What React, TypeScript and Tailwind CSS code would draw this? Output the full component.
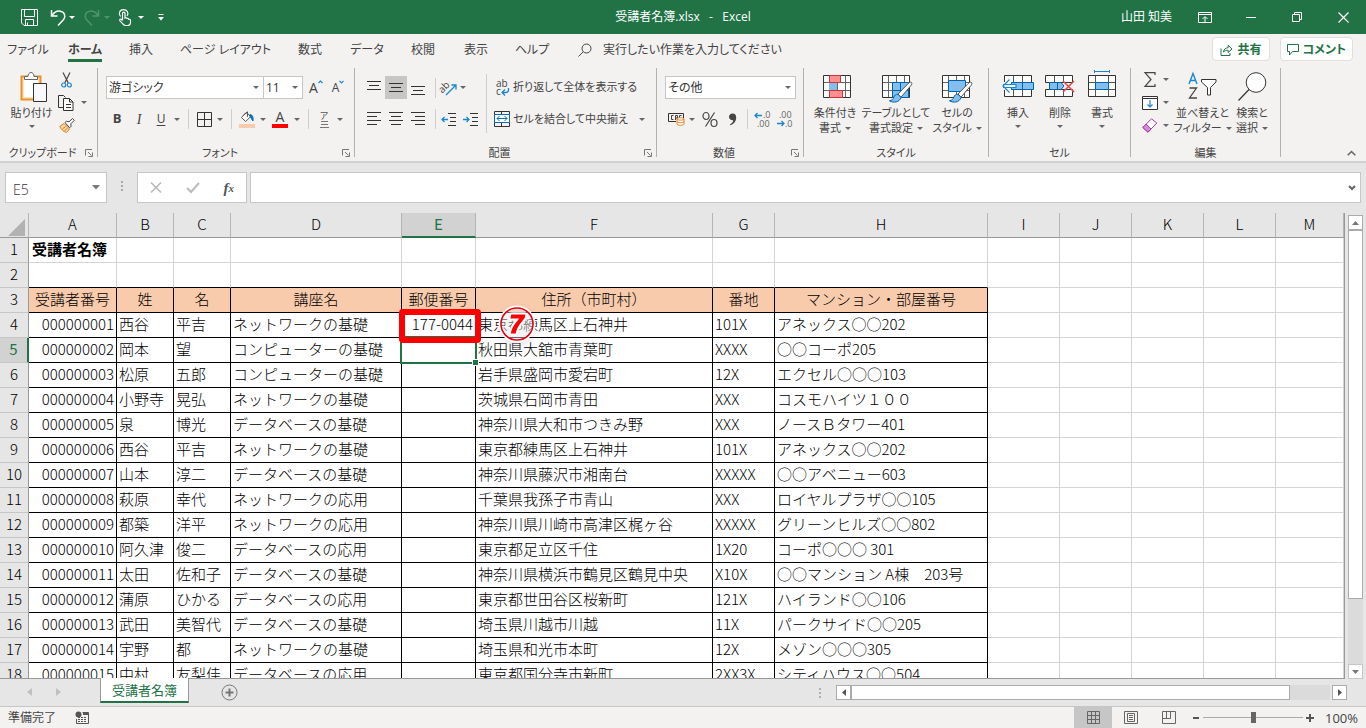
import type { ReactNode } from "react"
import clsx from "clsx"

const UI_FONT = "font-['Open_Sans','Noto_Sans_CJK_JP',sans-serif]"
const CELL_FONT = "font-['Noto_Sans_CJK_JP',sans-serif]"

const TABS = [
  { label: "ファイル", width: "w-14" },
  { label: "ホーム", width: "w-[58px]" },
  { label: "挿入", width: "w-[54px]" },
  { label: "ページ レイアウト", width: "w-[115px]" },
  { label: "数式", width: "w-[54px]" },
  { label: "データ", width: "w-[60px]" },
  { label: "校閲", width: "w-[52px]" },
  { label: "表示", width: "w-[54px]" },
  { label: "ヘルプ", width: "w-[58px]" },
]

const COLUMNS = [
  { name: "A", width: "w-[88px]" },
  { name: "B", width: "w-[57px]" },
  { name: "C", width: "w-[57px]" },
  { name: "D", width: "w-[171px]" },
  { name: "E", width: "w-[74px]" },
  { name: "F", width: "w-[237px]" },
  { name: "G", width: "w-[62px]" },
  { name: "H", width: "w-[213px]" },
  { name: "I", width: "w-[72px]" },
  { name: "J", width: "w-[72px]" },
  { name: "K", width: "w-[72px]" },
  { name: "L", width: "w-[72px]" },
  { name: "M", width: "" },
]

const HEADINGS = ["受講者番号", "姓", "名", "講座名", "郵便番号", "住所（市町村）", "番地", "マンション・部屋番号"]

const STUDENTS = [
  ["000000001", "西谷", "平吉", "ネットワークの基礎", "177-0044", "東京都練馬区上石神井", "101X", "アネックス○○202"],
  ["000000002", "岡本", "望", "コンピューターの基礎", "", "秋田県大舘市青葉町", "XXXX", "○○コーポ205"],
  ["000000003", "松原", "五郎", "コンピューターの基礎", "", "岩手県盛岡市愛宕町", "12X", "エクセル○○○103"],
  ["000000004", "小野寺", "晃弘", "ネットワークの基礎", "", "茨城県石岡市青田", "XXX", "コスモハイツ１００"],
  ["000000005", "泉", "博光", "データベースの基礎", "", "神奈川県大和市つきみ野", "XXX", "ノースＢタワー401"],
  ["000000006", "西谷", "平吉", "ネットワークの基礎", "", "東京都練馬区上石神井", "101X", "アネックス○○202"],
  ["000000007", "山本", "淳二", "データベースの基礎", "", "神奈川県藤沢市湘南台", "XXXXX", "○○アベニュー603"],
  ["000000008", "萩原", "幸代", "ネットワークの応用", "", "千葉県我孫子市青山", "XXX", "ロイヤルプラザ○○105"],
  ["000000009", "都築", "洋平", "ネットワークの応用", "", "神奈川県川崎市高津区梶ヶ谷", "XXXXX", "グリーンヒルズ○○802"],
  ["000000010", "阿久津", "俊二", "データベースの応用", "", "東京都足立区千住", "1X20", "コーポ○○○ 301"],
  ["000000011", "太田", "佐和子", "データベースの基礎", "", "神奈川県横浜市鶴見区鶴見中央", "X10X", "○○マンション A棟　203号"],
  ["000000012", "蒲原", "ひかる", "データベースの応用", "", "東京都世田谷区桜新町", "121X", "ハイランド○○106"],
  ["000000013", "武田", "美智代", "データベースの基礎", "", "埼玉県川越市川越", "11X", "パークサイド○○205"],
  ["000000014", "宇野", "都", "ネットワークの基礎", "", "埼玉県和光市本町", "12X", "メゾン○○○305"],
  ["000000015", "中村", "友梨佳", "データベースの応用", "", "東京都国分寺市新町", "2XX3X", "シティハウス○○504"],
]

function Svg({ w, h, className, children }: { w: number; h: number; className?: string; children: ReactNode }) {
  return (
    <svg
      width={w}
      height={h}
      viewBox={`0 0 ${w} ${h}`}
      fill="none"
      stroke="#444"
      aria-hidden="true"
      className={clsx("shrink-0 overflow-visible", className)}
    >
      {children}
    </svg>
  )
}

function Caret({ color = "#666" }: { color?: string }) {
  return (
    <Svg w={6} h={3}>
      <path d="M0 0h6L3 3z" fill={color} stroke="none" />
    </Svg>
  )
}

function IconButton({ label, className, children }: { label: string; className?: string; children: ReactNode }) {
  return (
    <button type="button" aria-label={label} className={clsx("flex shrink-0 items-center justify-center", className)}>
      {children}
    </button>
  )
}

function CaretButton({ label, className = "h-[22px] w-[10px]", color }: { label: string; className?: string; color?: string }) {
  return (
    <IconButton label={label} className={className}>
      <Caret color={color} />
    </IconButton>
  )
}

function Divider() {
  return <div className="mr-1 ml-[6px] h-5 w-px shrink-0 bg-[#d0cecc]" />
}

function Group({ label, width, launcher, children }: { label: string; width: string; launcher?: boolean; children: ReactNode }) {
  return (
    <>
      <section aria-label={label} className={clsx("flex h-[93px] shrink-0 flex-col", width)}>
        <div className="flex h-[77px]">{children}</div>
        <div className="flex h-4 items-center">
          <span className="flex-1 text-center leading-4">{label}</span>
          {launcher && (
            <IconButton label={`${label}の設定`} className="mr-1">
              <Svg w={8} h={8}>
                <path d="M.5 6.500V.5H7M3 3l3.500 3.500M7.500 3.500v4h-4" stroke="#777" />
              </Svg>
            </IconButton>
          )}
        </div>
      </section>
      <div className="h-[89px] w-px shrink-0 bg-[#b3b0ad]" />
    </>
  )
}

function LargeButton({ icon, lines, width }: { icon: ReactNode; lines: string[]; width: string }) {
  return (
    <button type="button" className={clsx("flex shrink-0 flex-col items-center whitespace-nowrap", width)}>
      <span className="flex h-[36px] items-center justify-center">{icon}</span>
      <span className="mt-px leading-4">{lines[0]}</span>
      {lines[1] ? (
        <span className="flex items-center gap-1 leading-[14px]">
          {lines[1]}
          <Caret />
        </span>
      ) : (
        <span className="mt-1">
          <Caret />
        </span>
      )}
    </button>
  )
}

function Combo({ label, value, className }: { label: string; value: string; className: string }) {
  return (
    <div className={clsx("relative h-[23px] border border-[#c8c6c4] bg-white", className)}>
      <select aria-label={label} className="h-full w-full appearance-none bg-transparent pl-[2px] text-[12px] leading-5 text-[#333]">
        <option>{value}</option>
      </select>
      <span className="pointer-events-none absolute top-[9px] right-1">
        <Caret />
      </span>
    </div>
  )
}

/* three or four text lines, used by every alignment button */
function LinesIcon({ lines }: { lines: [number, number, number][] }) {
  return (
    <Svg w={14} h={18}>
      {lines.map(([x, y, w]) => (
        <path key={y} d={`M${x} ${y}.500h${w}`} stroke="#333" />
      ))}
    </Svg>
  )
}

function GridBase() {
  return (
    <>
      <path d="M.5.5h27v22H.5z" fill="#fff" stroke="#333" />
      <path d="M6.500 1v21M14.500 1v21M22.500 1v21M1 7.500h26M1 15.500h26" stroke="#666" />
    </>
  )
}

function Brush() {
  return (
    <>
      <path d="M29.500 7.500c-1-1-2.500.2-3.500 1.200L16 19l3 3.200 9.800-11.500c.9-1.200 1.500-2.300.7-3.200z" fill="#fff" stroke="#555" />
      <path d="M15.800 19.200c-2 .1-3.400 1-4 3-.6 2-1.700 3-4.300 3.600 4 2.400 10 1.600 11.600-3.300z" fill="#83beec" stroke="#0063b1" />
    </>
  )
}

function TitleBar() {
  return (
    <header className="flex h-[34px] shrink-0 items-center bg-[#217346] text-[12px] text-white">
      <div className="flex flex-1 items-center">
        <IconButton label="上書き保存" className="ml-[18px] w-[22px]">
          <Svg w={17} h={17}>
            <path d="M.5.5h16v16H3L.5 14z M3.500 1v6.500h10V1 M4.500 16v-5.500h8V16 M6.500 16v-2.500" stroke="#fff" />
          </Svg>
        </IconButton>
        <IconButton label="元に戻す" className="ml-2 w-[20px]">
          <Svg w={16} h={17}>
            <path d="M1.500 1v6h6M1.800 6.800C4 3.500 7 1.700 10.300 2.200c4.200.6 5.800 5 3.300 8.300L8 16.500" stroke="#fff" strokeWidth="1.500" />
          </Svg>
        </IconButton>
        <CaretButton label="元に戻す一覧" className="w-[8px]" color="#fff" />
        <IconButton label="やり直し" className="ml-[6px] w-[20px]">
          <Svg w={16} h={17}>
            <path d="M14.500 1v6h-6M14.200 6.800C12 3.500 9 1.700 5.700 2.200 1.500 2.800-.1 7.200 2.400 10.500L8 16.500" stroke="#4f9370" strokeWidth="1.500" />
          </Svg>
        </IconButton>
        <CaretButton label="やり直し一覧" className="ml-px w-[8px]" color="#4f9370" />
        <IconButton label="タッチ/マウス モードの切り替え" className="ml-1 w-[18px]">
          <Svg w={13} h={17}>
            <path
              d="M4.500 11V4.500c0-1.800 2.500-1.800 2.500 0V9c1-.6 1.700-.3 2 .5.900-.4 1.500 0 1.800.8 1-.2 1.700.3 1.700 1.200v1.700c0 2-1.300 3.300-3.300 3.300H7.500c-1 0-1.800-.5-2.400-1.300L2 11.800c-.9-1.300.6-2.300 1.500-1.300l1 1"
              stroke="#fff"
              strokeWidth="1.200"
            />
            <path d="M2.500 7.500C-.2 4 2 .7 5.500.7S11.300 4 9 7" stroke="#fff" strokeWidth="1.200" />
          </Svg>
        </IconButton>
        <CaretButton label="モード一覧" className="ml-px w-[14px]" color="#fff" />
        <IconButton label="クイック アクセス ツール バーのユーザー設定" className="ml-[6px] w-[14px]">
          <Svg w={6} h={7}>
            <path d="M.5.5h5" stroke="#fff" />
            <path d="M0 3h6L3 6.500z" fill="#fff" stroke="none" />
          </Svg>
        </IconButton>
      </div>
      <h1>受講者名簿.xlsx&nbsp;&nbsp; -&nbsp;&nbsp; Excel</h1>
      <div className="flex flex-1 items-center justify-end">
        <span className="mr-[10px]">山田 知美</span>
        <IconButton label="リボンの表示オプション" className="w-[46px]">
          <Svg w={14} h={11}>
            <path d="M.5.5h13v10H.5zM1 2.500h12M7 10V5M4.500 7L7 4.500 9.500 7" stroke="#fff" />
          </Svg>
        </IconButton>
        <IconButton label="最小化" className="w-[46px]">
          <Svg w={10} h={10}>
            <path d="M0 5.500h10" stroke="#fff" />
          </Svg>
        </IconButton>
        <IconButton label="元に戻す (縮小)" className="w-[46px]">
          <Svg w={10} h={10}>
            <path d="M.5 2.500h7v7h-7zM2.500 2V.5h7v7H8" stroke="#fff" />
          </Svg>
        </IconButton>
        <IconButton label="閉じる" className="w-[46px]">
          <Svg w={11} h={11}>
            <path d="M.5.5l10 10M10.500.5l-10 10" stroke="#fff" strokeWidth="1.200" />
          </Svg>
        </IconButton>
      </div>
    </header>
  )
}

function TabBar() {
  return (
    <nav className="flex h-[30px] shrink-0 items-center text-[12px] text-[#444] [font-feature-settings:'palt']">
      {TABS.map((tab) => (
        <button
          key={tab.label}
          type="button"
          className={clsx("flex h-[28px] shrink-0 flex-col items-center whitespace-nowrap", tab.width)}
        >
          <span
            className={clsx(
              "h-[27px] pt-[5px] leading-5",
              tab.label === "ホーム" && "border-b-3 border-[#217346] font-bold",
            )}
          >
            {tab.label}
          </span>
        </button>
      ))}
      <label className="ml-[17px] flex flex-1 items-center gap-[11px] pt-px">
        <Svg w={14} h={14}>
          <circle cx="8.500" cy="5.500" r="4.500" />
          <path d="M5.200 8.800L.5 13.500" />
        </Svg>
        <input
          aria-label="操作アシスト"
          placeholder="実行したい作業を入力してください"
          className="w-full bg-transparent placeholder:text-[#444]"
        />
      </label>
      <div className="mr-[13px] flex gap-[10px] font-bold text-[#217346]">
        <button type="button" className="flex h-6 items-center gap-[5px] rounded-sm border border-[#e1dfdd] bg-white px-[7px] pt-px">
          <Svg w={13} h={12}>
            <path d="M1 4.500v7h9V9M3.500 8c.3-2.700 2-4.200 4.700-4.300V1.300L12 5 8.200 8.500V6.300C6.200 6.200 4.700 6.800 3.500 8z" stroke="#217346" />
          </Svg>
          共有
        </button>
        <button type="button" className="flex h-6 items-center gap-1 rounded-sm border border-[#e1dfdd] bg-white px-[6px] pt-px">
          <Svg w={12} h={12}>
            <path d="M.5.5h11v7H5.500L2.500 11V7.500h-2z" stroke="#217346" />
          </Svg>
          コメント
        </button>
      </div>
    </nav>
  )
}

function ClipboardGroup() {
  return (
    <Group label="クリップボード" width="w-[97px]" launcher>
      <button type="button" className="ml-[9px] flex w-[45px] flex-col items-center pt-1 whitespace-nowrap">
        <Svg w={28} h={30} className="ml-1">
          <path d="M1.500 4.500h19v23h-19z" fill="#fde4b8" stroke="#e8912d" strokeWidth="2" />
          <path d="M4 7h14v18H4z" fill="#fff" stroke="none" />
          <path d="M4.500 7.500v-3H8C8 2 9.500.5 11 .5S14 2 14 4.500h3.500v3z" fill="#fff" stroke="#666" />
          <path d="M13.500 11.500h13v18h-13z" fill="#f8f8fd" stroke="#333" />
        </Svg>
        <span className="mt-[3px] mb-1 leading-4">貼り付け</span>
        <Caret />
      </button>
      <div className="ml-1 flex flex-col">
        <IconButton label="切り取り" className="h-[23px] w-4">
          <Svg w={11} h={16}>
            <path d="M2 0.500L7.300 11M9 .5L3.700 11" stroke="#444" strokeWidth="1.200" />
            <circle cx="2.700" cy="13" r="2" stroke="#1b87d0" strokeWidth="1.200" />
            <circle cx="8.300" cy="13" r="2" stroke="#1b87d0" strokeWidth="1.200" />
          </Svg>
        </IconButton>
        <div className="flex">
          <IconButton label="コピー" className="h-[23px] w-4">
            <Svg w={16} h={16}>
              <path d="M5 12.500H.5V.5h5l2 2" stroke="#333" />
              <path d="M5.500 3.500h6l3.500 3.500v8.500H5.500z" fill="#fff" stroke="#333" />
              <path d="M11.500 3.500V7H15M8 9.500h5M8 12.500h5" stroke="#333" />
            </Svg>
          </IconButton>
          <CaretButton label="コピー一覧" className="ml-1 w-[12px]" />
        </div>
        <IconButton label="書式のコピー/貼り付け" className="h-[23px] w-[18px]">
          <Svg w={16} h={15}>
            <path d="M.8 8.500L5 5.500l5.500 5.500-3 3.500C4.500 13.500 2 11.500.8 8.500z" fill="#fcd9a8" stroke="#e07b1e" />
            <path d="M3.500 11l3-2.500M5.500 13l3-3" stroke="#e07b1e" />
            <path d="M6 4.500l1.500-1.200 2.500.5L13.500.5l1.800 1.800-3.500 3.500.3 2.400-1.400 1.600z" fill="#fff" stroke="#444" />
          </Svg>
        </IconButton>
      </div>
    </Group>
  )
}

function FontGroup() {
  return (
    <Group label="フォント" width="w-[256px]" launcher>
      <div className="pt-2 pl-2">
        <div className="flex items-center">
          <Combo label="フォント名" value="游ゴシック" className="w-[158px]" />
          <Combo label="フォント サイズ" value="11" className="-ml-px w-[40px]" />
          <IconButton label="フォント サイズの拡大" className="ml-[2px] w-[22px] items-start text-[14px] leading-4">
            A
            <Svg w={5} h={4}>
              <path d="M.5 3L2.500 1l2 2" stroke="#1b87d0" strokeWidth="1.200" />
            </Svg>
          </IconButton>
          <IconButton label="フォント サイズの縮小" className="w-[22px] items-start text-[12px] leading-4">
            A
            <Svg w={5} h={4}>
              <path d="M.5.800l2 2 2-2" stroke="#1b87d0" strokeWidth="1.200" />
            </Svg>
          </IconButton>
        </div>
        <div className="mt-[9px] flex h-[22px] items-center">
          <IconButton label="太字" className="w-[22px] text-[13px] font-bold">
            B
          </IconButton>
          <IconButton label="斜体" className="w-[22px] font-['Liberation_Serif',serif] text-[14px] italic">
            I
          </IconButton>
          <IconButton label="下線" className="w-[22px] text-[12px] underline underline-offset-2">
            U
          </IconButton>
          <CaretButton label="下線の種類" />
          <Divider />
          <IconButton label="罫線" className="w-[22px]">
            <Svg w={15} h={15}>
              <path d="M.5.5h14v14H.5zM7.500 1v13M1 7.500h13" stroke="#333" />
            </Svg>
          </IconButton>
          <CaretButton label="罫線の種類" />
          <Divider />
          <IconButton label="塗りつぶしの色" className="w-[22px]">
            <Svg w={16} h={17}>
              <path d="M7 1.500L2.500 6.500l4.200 4 5-5zM4.500 4.200L8.500.8v5" fill="#fff" stroke="#555" />
              <path d="M11 3.500c2.500.3 3.500 2.500 3 6.500-1.200-1-1.500-3-3-4.500z" fill="#0f6cbd" stroke="#0f6cbd" />
              <path d="M0 13h16v4H0z" fill="#f8cbad" stroke="none" />
            </Svg>
          </IconButton>
          <CaretButton label="塗りつぶしの色一覧" />
          <IconButton label="フォントの色" className="w-[24px]">
            <span className="w-4 border-b-4 border-[#f00] text-[14px] leading-[14px]">A</span>
          </IconButton>
          <CaretButton label="フォントの色一覧" />
          <Divider />
          <IconButton label="ふりがなの表示" className="w-[22px] flex-col text-[9px] leading-[10px] text-[#555]">
            ア
            <Svg w={9} h={7}>
              <path d="M1 .5h7M1 3.500h7M0 6.500h9" stroke="#777" />
            </Svg>
          </IconButton>
          <CaretButton label="ふりがなの設定" />
        </div>
      </div>
    </Group>
  )
}

function AlignmentGroup() {
  return (
    <Group label="配置" width="w-[301px]" launcher>
      <div className="pt-2 pl-2">
        <div className="flex h-[23px] items-center">
          <IconButton label="上揃え" className="h-[23px] w-[22px]">
            <LinesIcon lines={[[0, 2, 14], [2, 6, 10], [0, 10, 14]]} />
          </IconButton>
          <IconButton label="上下中央揃え" className="h-[23px] w-[22px] bg-[#c8c6c4]">
            <LinesIcon lines={[[0, 4, 14], [2, 8, 10], [0, 12, 14]]} />
          </IconButton>
          <IconButton label="下揃え" className="h-[23px] w-[22px]">
            <LinesIcon lines={[[0, 7, 14], [2, 11, 10], [0, 15, 14]]} />
          </IconButton>
          <Divider />
          <IconButton label="方向" className="w-[18px]">
            <Svg w={18} h={16}>
              <text x="-1" y="10" transform="rotate(-45 5 8)" fontSize="10" fill="#444" stroke="none">
                ab
              </text>
              <path d="M6 15L16 5M11.500 5H16v4.500" stroke="#1b87d0" strokeWidth="1.300" />
            </Svg>
          </IconButton>
          <CaretButton label="方向一覧" />
        </div>
        <div className="mt-[9px] flex h-[22px] items-center">
          <IconButton label="左揃え" className="w-[22px]">
            <LinesIcon lines={[[0, 2, 14], [0, 6, 10], [0, 10, 14], [0, 14, 10]]} />
          </IconButton>
          <IconButton label="中央揃え" className="w-[22px]">
            <LinesIcon lines={[[0, 2, 14], [2, 6, 10], [0, 10, 14], [2, 14, 10]]} />
          </IconButton>
          <IconButton label="右揃え" className="w-[22px]">
            <LinesIcon lines={[[0, 2, 14], [4, 6, 10], [0, 10, 14], [4, 14, 10]]} />
          </IconButton>
          <Divider />
          <IconButton label="インデントを減らす" className="w-[16px]">
            <Svg w={15} h={13}>
              <path d="M7 .5h8M9 4.500h6M9 8.500h6M7 12.500h8" stroke="#333" />
              <path d="M1 6.500h6M3.500 4L1 6.500 3.500 9" stroke="#1b87d0" strokeWidth="1.300" />
            </Svg>
          </IconButton>
          <IconButton label="インデントを増やす" className="ml-[6px] w-[16px]">
            <Svg w={15} h={13}>
              <path d="M7 .5h8M9 4.500h6M9 8.500h6M7 12.500h8" stroke="#333" />
              <path d="M0 6.500h6M3.500 4L6 6.500 3.500 9" stroke="#1b87d0" strokeWidth="1.300" />
            </Svg>
          </IconButton>
        </div>
      </div>
      <div className="mt-[6px] ml-2 h-[59px] w-px bg-[#d0cecc]" />
      <div className="pt-2 pl-[7px]">
        <button type="button" className="flex h-[23px] items-center gap-[3px] whitespace-nowrap">
          <Svg w={16} h={17}>
            <text x="2" y="8" fontSize="10" fill="#444" stroke="none">
              ab
            </text>
            <text x="2" y="16" fontSize="10" fill="#444" stroke="none">
              c
            </text>
            <path d="M14.500 9v2c0 2-1 2.500-3 2.500H8.500M11 10.500l-3 3 3 3" stroke="#1b87d0" strokeWidth="1.300" />
          </Svg>
          折り返して全体を表示する
        </button>
        <div className="mt-[9px] flex">
          <button type="button" className="flex h-[22px] w-[143px] items-center gap-[3px] whitespace-nowrap">
            <Svg w={16} h={16}>
              <path d="M.5.5h15v15H.5zM7.500 0v3M7.500 12v4" stroke="#333" />
              <path d="M.5 3.500h15v8H.5z" fill="#fff" stroke="#0f6cbd" />
              <path d="M3 7.500h10M5.500 5L3 7.500 5.500 10M10.500 5L13 7.500 10.500 10" stroke="#0f6cbd" />
            </Svg>
            セルを結合して中央揃え
          </button>
          <CaretButton label="結合一覧" />
        </div>
      </div>
    </Group>
  )
}

function NumberGroup() {
  return (
    <Group label="数値" width="w-[146px]" launcher>
      <div className="pt-2 pl-2">
        <Combo label="表示形式" value="その他" className="w-[131px]" />
        <div className="mt-[9px] flex h-[22px] items-center">
          <IconButton label="通貨表示形式" className="w-[22px]">
            <Svg w={17} h={14}>
              <path d="M.5 1.500h15v5M.5 1.500v8H8" stroke="#333" />
              <path d="M5.500 3.500h-2v4h2M7.500 8V3.500h2V8M7.500 6h2M13.500 3.500h-2V6" stroke="#444" />
              <path d="M9 7c0-1.700 7-1.700 7 0v5c0 1.700-7 1.700-7 0z" fill="#fff" stroke="#e8812d" />
              <path d="M9 7c0 1.500 7 1.500 7 0M9 9.500c0 1.500 7 1.500 7 0" stroke="#e8812d" />
            </Svg>
          </IconButton>
          <CaretButton label="通貨一覧" />
          <IconButton label="パーセント スタイル" className="w-[26px]">
            <Svg w={16} h={15}>
              <path d="M12.500.5l-9 14" stroke="#444" strokeWidth="1.200" />
              <ellipse cx="4" cy="4" rx="3" ry="3.500" strokeWidth="1.200" />
              <ellipse cx="12" cy="11" rx="3" ry="3.500" strokeWidth="1.200" />
            </Svg>
          </IconButton>
          <IconButton label="桁区切りスタイル" className="w-[18px]">
            <Svg w={9} h={13}>
              <path d="M4.500.5C7 .5 8.200 2 8.200 4.500c0 3.700-2.200 6.500-5.700 7.800l-.5-1c2-1 3.200-2.300 3.200-4C2.800 7.500 1 6 1 4 1 2 2.500.5 4.500.5z" fill="#444" stroke="none" />
            </Svg>
          </IconButton>
          <Divider />
          <IconButton label="小数点以下の表示桁数を増やす" className="w-[20px]">
            <Svg w={17} h={16}>
              <path d="M1 4.500h7M3.500 2L1 4.500 3.500 7" stroke="#1b87d0" strokeWidth="1.300" />
              <text x="9" y="7" fontSize="9" fill="#666" stroke="none">.0</text>
              <text x="3" y="16" fontSize="9" fill="#666" stroke="none">.00</text>
            </Svg>
          </IconButton>
          <IconButton label="小数点以下の表示桁数を減らす" className="ml-[2px] w-[20px]">
            <Svg w={17} h={16}>
              <path d="M1 12.500h7M5.500 10L8 12.500 5.500 15" stroke="#1b87d0" strokeWidth="1.300" />
              <text x="3" y="7" fontSize="9" fill="#666" stroke="none">.00</text>
              <text x="9" y="16" fontSize="9" fill="#666" stroke="none">.0</text>
            </Svg>
          </IconButton>
        </div>
      </div>
    </Group>
  )
}

function StyleGroup() {
  return (
    <Group label="スタイル" width="w-[184px]">
      <div className="flex w-full justify-center">
        <LargeButton
          width="w-[54px]"
          lines={["条件付き", "書式"]}
          icon={
            <Svg w={24} h={28}>
              <g transform="translate(0 3)">
                <GridBase />
                <path d="M6.500.5h11v7h-11zM6.500 15.500h13v7h-13z" fill="#ff9090" stroke="#d13438" />
                <path d="M6 8h8v7H6z" fill="#83beec" stroke="none" />
              </g>
            </Svg>
          }
        />
        <LargeButton
          width="w-[68px]"
          lines={["テーブルとして", "書式設定"]}
          icon={
            <Svg w={28} h={22}>
              <GridBase />
              <path d="M10.500 7.500h16v15h-16z" fill="#83beec" stroke="#0063b1" />
              <path d="M18.500 8v14M11 15.500h15" stroke="#0063b1" />
              <Brush />
            </Svg>
          }
        />
        <LargeButton
          width="w-[54px]"
          lines={["セルの", "スタイル"]}
          icon={
            <Svg w={31} h={22}>
              <GridBase />
              <path d="M6.500 5.500h17v11h-17z" fill="#83beec" stroke="#0063b1" />
              <Brush />
            </Svg>
          }
        />
      </div>
    </Group>
  )
}

function CellGroup() {
  return (
    <Group label="セル" width="w-[141px]">
      <div className="flex pl-2">
        <LargeButton
          width="w-[42px]"
          lines={["挿入"]}
          icon={
            <Svg w={32} h={24}>
              <path d="M2.500 1.500h27v21h-27z" fill="#fff" stroke="#333" />
              <path d="M11.500 2v20M20.500 2v20" stroke="#555" />
              <path d="M9.500 8.500h22v7h-22z" fill="#83beec" stroke="#0063b1" />
              <path d="M20.500 9v6" stroke="#0063b1" />
              <path d="M0 8h9v8H0z" fill="#f3f2f1" stroke="none" />
              <path d="M7.500 5.500L1 12l6.500 6.500M1 10.500h13v3H1" fill="#fff" stroke="#1b87d0" strokeWidth="1.200" />
            </Svg>
          }
        />
        <LargeButton
          width="w-[42px]"
          lines={["削除"]}
          icon={
            <Svg w={30} h={24}>
              <path d="M.5 1.500h27v7H.5zM.5 15.500h27v7H.5z" fill="#fff" stroke="#333" />
              <path d="M9.500 2v6M18.500 2v6M9.500 16v6M18.500 16v6" stroke="#555" />
              <path d="M4.500 8.500H16l3 3.500-3 3.500H4.500z" fill="#83beec" stroke="#0063b1" />
              <path d="M12.500 9v6" stroke="#0063b1" />
              <path d="M18 7l11 11M29 7L18 18" stroke="#e8484c" strokeWidth="1.500" />
            </Svg>
          }
        />
        <LargeButton
          width="w-[42px]"
          lines={["書式"]}
          icon={
            <Svg w={28} h={32}>
              <path d="M6.500 1.500h15M6.500 0v3M21.500 0v3" stroke="#1b87d0" />
              <path d="M.5 5.500h27v21H.5z" fill="#fff" stroke="#333" />
              <path d="M7.500 6v20M20.500 6v20M1 12.500h26M1 19.500h26" stroke="#555" />
              <path d="M7.500 12.500h13v7h-13z" fill="#83beec" stroke="#0063b1" />
            </Svg>
          }
        />
      </div>
    </Group>
  )
}

function EditGroup() {
  return (
    <Group label="編集" width="w-[149px]">
      <div className="flex pl-[11px]">
        <div className="flex w-[34px] flex-col">
          <div className="flex gap-[3px]">
            <IconButton label="オート SUM" className="h-[23px] w-4">
              <Svg w={12} h={15}>
                <path d="M11 3V.7H1L7 7.500l-6 6.800h10V12" strokeWidth="1.200" />
              </Svg>
            </IconButton>
            <CaretButton label="集計方法" />
          </div>
          <div className="flex gap-[3px]">
            <IconButton label="フィル" className="h-[23px] w-4">
              <Svg w={16} h={14}>
                <path d="M.5.5h15v13H.5zM1 2.500h14" fill="#fff" stroke="#333" />
                <path d="M8 4v7M5.500 8.500L8 11l2.500-2.500" stroke="#1b87d0" strokeWidth="1.200" />
              </Svg>
            </IconButton>
            <CaretButton label="フィルの種類" />
          </div>
          <div className="flex gap-[3px]">
            <IconButton label="クリア" className="h-[23px] w-4">
              <Svg w={16} h={15}>
                <path d="M9.500.8L14.800 5 6 14.200.8 9.500z" fill="#fff" stroke="#a33ea8" />
                <path d="M.8 9.500L4 6l5 5-3 3.200z" fill="#cf8fd4" stroke="#a33ea8" />
              </Svg>
            </IconButton>
            <CaretButton label="クリアの種類" />
          </div>
        </div>
        <LargeButton
          width="w-[53px]"
          lines={["並べ替えと", "フィルター"]}
          icon={
            <Svg w={29} h={28}>
              <path d="M1 12L5 1.500 9 12M2.500 8.500h5" stroke="#1b87d0" strokeWidth="1.400" />
              <path d="M1.500 16h7L1.500 26h7.500" strokeWidth="1.300" />
              <path d="M13.500 7.500h14.500v2.500l-5.500 5.500V23h-3v-7.500L13.500 10z" fill="#fff" stroke="#333" />
            </Svg>
          }
        />
        <LargeButton
          width="w-[46px]"
          lines={["検索と", "選択"]}
          icon={
            <Svg w={29} h={29}>
              <circle cx="18" cy="10.500" r="9.800" fill="#fff" stroke="#333" />
              <path d="M11 17.500L.5 28.500" stroke="#333" strokeWidth="1.200" />
            </Svg>
          }
        />
      </div>
    </Group>
  )
}

function Ribbon() {
  return (
    <div className="flex h-[97px] shrink-0 pt-1 text-[11px] text-[#444] [font-feature-settings:'palt']">
      <ClipboardGroup />
      <FontGroup />
      <AlignmentGroup />
      <NumberGroup />
      <StyleGroup />
      <CellGroup />
      <EditGroup />
      <div className="flex flex-1 items-end justify-end pr-[10px] pb-[5px]">
        <IconButton label="リボンを折りたたむ">
          <Svg w={9} h={6}>
            <path d="M.7 5.200l3.800-3.700 3.800 3.700" stroke="#666" strokeWidth="1.600" />
          </Svg>
        </IconButton>
      </div>
    </div>
  )
}

function FormulaBar() {
  return (
    <div className="flex h-[52px] shrink-0 items-start border-t-2 border-[#d0d0d0] px-[5px] pt-[9px]">
      <div className="flex h-[31px] w-[102px] items-center border border-[#c6c6c6] bg-white pr-[6px]">
        <input
          aria-label="名前ボックス"
          defaultValue="E5"
          className="w-full min-w-0 bg-transparent pt-1 pl-[7px] text-[14px] font-light text-[#333]"
        />
        <IconButton label="名前一覧">
          <Svg w={8} h={5}>
            <path d="M0 0h8L4 4.500z" fill="#777" stroke="none" />
          </Svg>
        </IconButton>
      </div>
      <Svg w={30} h={30}>
        <path d="M14 9h2v2h-2zM14 13h2v2h-2zM14 17h2v2h-2z" fill="#aaa" stroke="none" />
      </Svg>
      <div className="flex h-[31px] w-[110px] items-center justify-around border border-[#c6c6c6] bg-white">
        <IconButton label="キャンセル">
          <Svg w={12} h={11}>
            <path d="M1 .5l10 10M11 .5l-10 10" stroke="#bbb" strokeWidth="1.700" />
          </Svg>
        </IconButton>
        <IconButton label="入力">
          <Svg w={14} h={11}>
            <path d="M1 6l4 4 8-9" stroke="#bbb" strokeWidth="2" />
          </Svg>
        </IconButton>
        <IconButton label="関数の挿入" className="font-['Liberation_Serif',serif] text-[15px] leading-5 font-bold text-[#555] italic">
          f<span className="text-[11px]">x</span>
        </IconButton>
      </div>
      <div className="ml-[3px] flex h-[31px] flex-1 items-center border border-[#c6c6c6] bg-white pr-1">
        <input aria-label="数式バー" className="h-full w-full min-w-0 bg-transparent px-2 text-[13px]" />
        <IconButton label="数式バーの展開">
          <Svg w={8} h={6}>
            <path d="M1 1l3 3 3-3" stroke="#666" strokeWidth="2" />
          </Svg>
        </IconButton>
      </div>
    </div>
  )
}

function RowHeader({ row }: { row: number }) {
  return (
    <th
      scope="row"
      className={clsx(
        "border-b border-b-[#c6c6c6] p-0 text-center align-top",
        row === 5
          ? "border-r-2 border-r-[#217346] bg-[#d2d2d2] font-normal text-[#217346]"
          : "border-r border-r-[#999] bg-[#e6e6e6] font-light",
      )}
    >
      {row}
    </th>
  )
}

function EmptyCells({ from }: { from: number }) {
  return (
    <>
      {COLUMNS.slice(from).map((column) => (
        <td key={column.name} className="border-r border-b border-[#d4d4d4] p-0" />
      ))}
    </>
  )
}

function Sheet() {
  return (
    <div className="min-w-0 flex-1 overflow-hidden border-r border-b border-[#999] bg-white">
      <table
        className={clsx(
          "w-full table-fixed border-separate border-spacing-0 text-[15px] leading-[22px] font-light text-black",
          CELL_FONT,
        )}
      >
        <colgroup>
          <col className="w-[29px]" />
          {COLUMNS.map((column) => (
            <col key={column.name} className={column.width} />
          ))}
        </colgroup>
        <thead>
          <tr className="h-[25px] bg-[#e6e6e6]">
            <td className="border-r border-b border-r-[#b5b5b5] border-b-[#999] p-0">
              <Svg w={17} h={17} className="mt-1 ml-2">
                <path d="M17 0v17H0z" fill="#b2b2b2" stroke="none" />
              </Svg>
            </td>
            {COLUMNS.map((column) => (
              <th
                key={column.name}
                scope="col"
                className={clsx(
                  "border-r border-r-[#b5b5b5] p-0 text-center align-top",
                  column.name === "E"
                    ? "border-b-2 border-b-[#217346] bg-[#d2d2d2] font-normal text-[#217346]"
                    : "border-b border-b-[#999] font-light",
                )}
              >
                {column.name}
              </th>
            ))}
          </tr>
        </thead>
        <tbody>
          <tr className="h-[25px]">
            <RowHeader row={1} />
            <td className="border-r border-b border-[#d4d4d4] p-0 pl-[3px] align-top font-bold whitespace-nowrap">受講者名簿</td>
            <EmptyCells from={1} />
          </tr>
          <tr className="h-[25px]">
            <RowHeader row={2} />
            {COLUMNS.map((column, i) => (
              <td
                key={column.name}
                className={clsx("border-r border-b border-r-[#d4d4d4] p-0", i < 8 ? "border-b-black" : "border-b-[#d4d4d4]")}
              />
            ))}
          </tr>
          <tr className="h-[25px]">
            <RowHeader row={3} />
            {HEADINGS.map((heading) => (
              <td key={heading} className="border-r border-b border-black bg-[#f8cbad] p-0 text-center align-top whitespace-nowrap">
                {heading}
              </td>
            ))}
            <EmptyCells from={8} />
          </tr>
          {STUDENTS.map((student, r) => (
            <tr key={student[0]} className="h-[25px]">
              <RowHeader row={r + 4} />
              {student.map((value, c) => (
                <td
                  key={COLUMNS[c].name}
                  className={clsx(
                    "relative border-r border-b border-black p-0 px-[2px] align-top whitespace-nowrap",
                    (c === 0 || c === 4) && "text-right",
                  )}
                >
                  {value}
                  {r === 0 && c === 4 && (
                    <span className="absolute -top-1 -left-[3px] z-20 h-[34px] w-[82px] rounded-sm border-6 border-[#f00]" />
                  )}
                  {r === 0 && c === 5 && <StepBadge />}
                  {r === 1 && c === 4 && (
                    <span className="absolute -inset-[2px] z-10 border-2 border-[#217346]">
                      <span className="absolute -right-1 -bottom-1 h-[7px] w-[7px] border border-white bg-[#217346]" />
                    </span>
                  )}
                </td>
              ))}
              <EmptyCells from={8} />
            </tr>
          ))}
        </tbody>
      </table>
    </div>
  )
}

function StepBadge() {
  return (
    <span className="absolute -top-2 left-[22px] z-30">
      <Svg w={38} h={38} className="drop-shadow-md">
        <circle cx="19" cy="19" r="17" fill="#fff" fillOpacity="0.4" stroke="#fff" strokeWidth="3" />
        <circle cx="19" cy="19" r="16" stroke="#e60012" strokeWidth="1.600" />
        <text
          x="18.500"
          y="28"
          textAnchor="middle"
          fontSize="26"
          fill="#f00"
          stroke="#fff"
          strokeWidth="5"
          paintOrder="stroke"
          strokeLinejoin="round"
          className="font-['Liberation_Sans',sans-serif] font-bold italic"
        >
          7
        </text>
        <text
          x="18.500"
          y="28"
          textAnchor="middle"
          fontSize="26"
          fill="#f00"
          stroke="#f00"
          strokeWidth="1"
          aria-hidden="true"
          className="font-['Liberation_Sans',sans-serif] font-bold italic"
        >
          7
        </text>
      </Svg>
    </span>
  )
}

function VerticalScroll() {
  return (
    <div className="mx-[3px] flex w-[15px] shrink-0 flex-col bg-[#dbdbdb]">
      <div className="h-[2px] bg-[#e6e6e6]" />
      <IconButton label="上へスクロール" className="h-[15px] border border-[#ababab] bg-white">
        <Svg w={7} h={4}>
          <path d="M0 4h7L3.500 0z" fill="#777" stroke="none" />
        </Svg>
      </IconButton>
      <div className="flex-1">
        <div className="h-[85%] border border-[#ababab] bg-white" />
      </div>
      <IconButton label="下へスクロール" className="h-[15px] border border-[#c6c6c6] bg-white">
        <Svg w={7} h={4}>
          <path d="M0 0h7L3.500 4z" fill="#777" stroke="none" />
        </Svg>
      </IconButton>
    </div>
  )
}

function SheetTabs() {
  return (
    <div className="flex h-[27px] shrink-0 items-start">
      <div className="flex h-[26px] w-[100px] items-center pl-[27px]">
        <IconButton label="前のシート">
          <Svg w={5} h={8}>
            <path d="M5 0v8L0 4z" fill="#c0c0c0" stroke="none" />
          </Svg>
        </IconButton>
        <IconButton label="次のシート" className="ml-6">
          <Svg w={5} h={8}>
            <path d="M0 0v8l5-4z" fill="#c0c0c0" stroke="none" />
          </Svg>
        </IconButton>
      </div>
      <button
        type="button"
        className={clsx(
          "z-10 -mt-px h-[25px] w-[89px] border-x border-b-2 border-x-[#999] border-b-[#217346] bg-white text-[13px] leading-[23px] text-[#217346]",
          CELL_FONT,
        )}
      >
        受講者名簿
      </button>
      <IconButton label="新しいシート" className="ml-8 h-[26px]">
        <Svg w={17} h={17}>
          <circle cx="8.500" cy="8.500" r="7.500" stroke="#777" />
          <path d="M8.500 4.500v8M4.500 8.500h8" stroke="#777" strokeWidth="2" />
        </Svg>
      </IconButton>
      <div className="mt-[6px] mr-[19px] ml-auto flex w-[528px] items-center">
        <Svg w={2} h={10} className="mr-[15px]">
          <path d="M0 0h2v2H0zM0 4h2v2H0zM0 8h2v2H0z" fill="#b0b0b0" stroke="none" />
        </Svg>
        <IconButton label="左へスクロール" className="h-[15px] w-[15px] border border-[#ababab] bg-white">
          <Svg w={4} h={7}>
            <path d="M4 0v7L0 3.500z" fill="#555" stroke="none" />
          </Svg>
        </IconButton>
        <div className="h-[15px] flex-1 bg-[#dbdbdb]">
          <div className="h-full w-11/12 border border-[#ababab] bg-white" />
        </div>
        <IconButton label="右へスクロール" className="ml-[2px] h-[15px] w-[15px] border border-[#ababab] bg-white">
          <Svg w={4} h={7}>
            <path d="M0 0v7l4-3.500z" fill="#555" stroke="none" />
          </Svg>
        </IconButton>
      </div>
    </div>
  )
}

function StatusBar() {
  return (
    <footer className="flex h-[22px] shrink-0 items-center border-t border-[#c6c6c6] bg-[#f3f2f1] pl-2 text-[12px] text-[#444]">
      <span className="leading-5">準備完了</span>
      <IconButton label="マクロの記録" className="ml-[19px]">
        <Svg w={14} h={13}>
          <circle cx="3.500" cy="3.500" r="3" fill="#555" stroke="none" />
          <path d="M7.500 1.500h6v11h-12V8" stroke="#555" />
          <path d="M8 2h5v2H8z" fill="#555" stroke="none" />
          <path d="M3 6.500h2M6 6.500h2M9 6.500h2M3 8.500h2M6 8.500h2M9 8.500h2M3 10.500h2M6 10.500h2M9 10.500h2" stroke="#555" />
        </Svg>
      </IconButton>
      <div className="ml-auto flex h-full items-center">
        <IconButton label="標準" className="h-full w-[38px] bg-[#c6c6c6]">
          <Svg w={13} h={13}>
            <path d="M.5.5h12v12H.5zM4.500 1v11M8.500 1v11M1 4.500h11M1 8.500h11" stroke="#666" />
          </Svg>
        </IconButton>
        <IconButton label="ページ レイアウト" className="w-[38px]">
          <Svg w={14} h={13}>
            <path d="M.5.5h13v12H.5zM3.500 2.500h7v8h-7zM5 4.500h4M5 6.500h4M5 8.500h4" stroke="#666" />
          </Svg>
        </IconButton>
        <IconButton label="改ページ プレビュー" className="w-[38px]">
          <Svg w={14} h={13}>
            <path d="M.5.5h13v12H.5zM.5 7.500h8V.5M4.500 1v6" stroke="#666" />
          </Svg>
        </IconButton>
        <IconButton label="縮小" className="ml-px h-full w-[14px]">
          <Svg w={6} h={2}>
            <path d="M0 1h6" stroke="#555" strokeWidth="2" />
          </Svg>
        </IconButton>
        <input
          type="range"
          aria-label="ズーム"
          min={0}
          max={200}
          defaultValue={100}
          className="h-3 w-[100px] appearance-none bg-[linear-gradient(#aaa,#aaa)] bg-[length:100%_1px] bg-center bg-no-repeat [&::-webkit-slider-thumb]:h-[11px] [&::-webkit-slider-thumb]:w-[5px] [&::-webkit-slider-thumb]:appearance-none [&::-webkit-slider-thumb]:bg-[#666]"
        />
        <IconButton label="拡大" className="h-full w-[14px]">
          <Svg w={8} h={8}>
            <path d="M0 4h8M4 0v8" stroke="#555" strokeWidth="2" />
          </Svg>
        </IconButton>
        <button type="button" className="mr-2 w-[41px] text-right text-[13px] leading-5">
          100%
        </button>
      </div>
    </footer>
  )
}

export default function App() {
  return (
    <div className={clsx("flex h-screen flex-col overflow-hidden bg-[#e6e6e6]", UI_FONT)}>
      <TitleBar />
      <div className="shrink-0 bg-[#f3f2f1]">
        <TabBar />
        <Ribbon />
      </div>
      <FormulaBar />
      <main className="flex min-h-0 flex-1">
        <Sheet />
        <VerticalScroll />
      </main>
      <SheetTabs />
      <StatusBar />
    </div>
  )
}
